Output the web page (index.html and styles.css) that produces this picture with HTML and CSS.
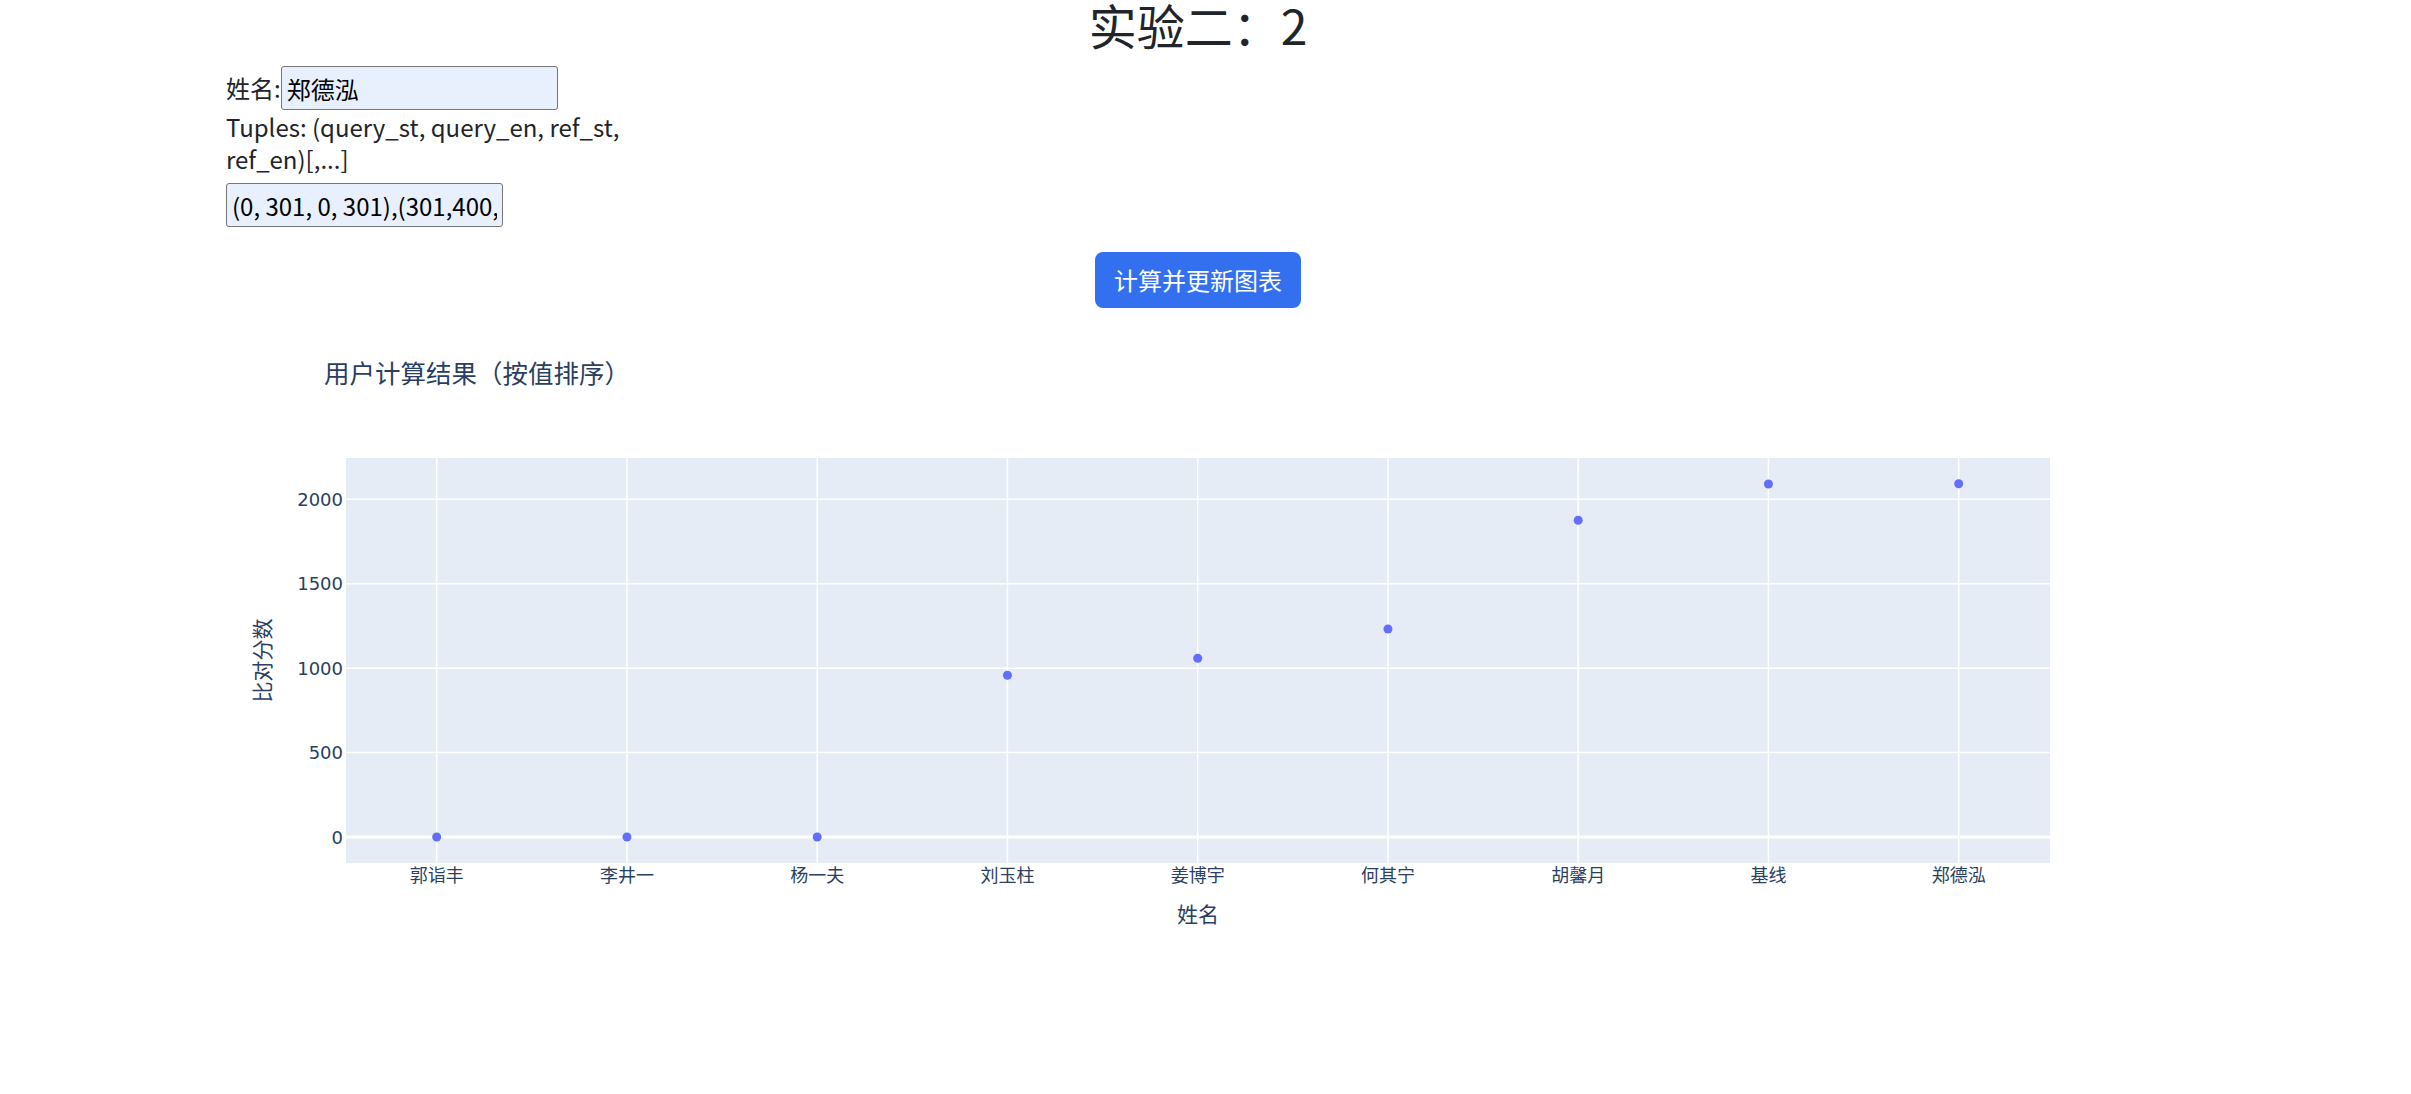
FILE: index.html
```html
<!DOCTYPE html>
<html lang="zh">
<head>
<meta charset="utf-8">
<title>实验二</title>
<link rel="stylesheet" href="styles.css">
</head>
<body>
<div class="page">
  <div class="container">
    <h1 class="title">实验二：2</h1>
    <div class="form">
      <div class="name-row"><label class="name-label">姓名:</label><input class="field" value="郑德泓"></div>
      <label class="tuples-label">Tuples: (query_st, query_en, ref_st, ref_en)[,...]</label>
      <input class="field tuples-field" value="(0, 301, 0, 301),(301,400, 301, 400)">
    </div>
    <div class="actions"><button class="btn">计算并更新图表</button></div>
    <div class="chart">
      <svg class="plot" width="1944" height="675" viewBox="0 0 1944 675">
        <rect x="120" y="150" width="1704" height="405" fill="#E5ECF6"/>
        <g stroke="#ffffff" stroke-width="1.5">
          <line x1="210.7" y1="150" x2="210.7" y2="555"/>
          <line x1="400.95" y1="150" x2="400.95" y2="555"/>
          <line x1="591.2" y1="150" x2="591.2" y2="555"/>
          <line x1="781.45" y1="150" x2="781.45" y2="555"/>
          <line x1="971.7" y1="150" x2="971.7" y2="555"/>
          <line x1="1161.95" y1="150" x2="1161.95" y2="555"/>
          <line x1="1352.2" y1="150" x2="1352.2" y2="555"/>
          <line x1="1542.45" y1="150" x2="1542.45" y2="555"/>
          <line x1="1732.7" y1="150" x2="1732.7" y2="555"/>
          <line x1="120" y1="191.3" x2="1824" y2="191.3"/>
          <line x1="120" y1="275.7" x2="1824" y2="275.7"/>
          <line x1="120" y1="360.2" x2="1824" y2="360.2"/>
          <line x1="120" y1="444.6" x2="1824" y2="444.6"/>
        </g>
        <line x1="120" y1="529" x2="1824" y2="529" stroke="#ffffff" stroke-width="3"/>
        <g fill="#636EFA">
          <circle cx="210.7" cy="529" r="4.5"/>
          <circle cx="400.95" cy="529" r="4.5"/>
          <circle cx="591.2" cy="529" r="4.5"/>
          <circle cx="781.45" cy="367.3" r="4.5"/>
          <circle cx="971.7" cy="350.3" r="4.5"/>
          <circle cx="1161.95" cy="321" r="4.5"/>
          <circle cx="1352.2" cy="212.3" r="4.5"/>
          <circle cx="1542.45" cy="176" r="4.5"/>
          <circle cx="1732.7" cy="175.7" r="4.5"/>
        </g>
        <g class="ytick" text-anchor="end">
          <text x="117" y="197.9">2000</text>
          <text x="117" y="282.3">1500</text>
          <text x="117" y="366.8">1000</text>
          <text x="117" y="451.2">500</text>
          <text x="117" y="535.6">0</text>
        </g>
        <g class="xtick" text-anchor="middle">
          <text x="210.7" y="574">郭诣丰</text>
          <text x="400.95" y="574">李井一</text>
          <text x="591.2" y="574">杨一夫</text>
          <text x="781.45" y="574">刘玉柱</text>
          <text x="971.7" y="574">姜博宇</text>
          <text x="1161.95" y="574">何其宁</text>
          <text x="1352.2" y="574">胡馨月</text>
          <text x="1542.45" y="574">基线</text>
          <text x="1732.7" y="574">郑德泓</text>
        </g>
        <text class="axis-title" x="972" y="614" text-anchor="middle">姓名</text>
        <text class="axis-title" transform="translate(44,352.5) rotate(-90)" text-anchor="middle">比对分数</text>
        <text class="chart-title" x="98" y="75">用户计算结果（按值排序）</text>
      </svg>
    </div>
  </div>
</div>
</body>
</html>
```

FILE: styles.css
```css
body {
  margin: 0;
  background: #ffffff;
  color: #212529;
  font-family: "Noto Sans CJK SC", "Noto Sans", sans-serif;
}

.page {
  width: 2396px;
}

.container {
  width: 1944px;
  margin: 0 auto;
}

.title {
  margin: 0 0 18px;
  font-size: 48px;
  line-height: 48px;
  font-weight: 400;
  text-align: center;
}

.form {
  width: 420px;
  display: flex;
  flex-direction: column;
  align-items: flex-start;
  font-size: 24px;
}

.name-row {
  display: flex;
  align-items: center;
  height: 44px;
}

.name-label {
  line-height: 32px;
}

.field {
  box-sizing: border-box;
  width: 277px;
  height: 44px;
  padding: 0 5px;
  border: 1px solid #767676;
  border-radius: 3px;
  background: #e8f0fe;
  color: #000000;
  font-family: inherit;
  font-size: 24px;
}

.tuples-label {
  display: block;
  margin-top: 1px;
  line-height: 32px;
}

.tuples-field {
  margin-top: 8px;
}

.actions {
  display: flex;
  justify-content: center;
  margin-top: 25px;
}

.btn {
  height: 56px;
  padding: 0 19px;
  border: none;
  border-radius: 8px;
  background: #3370f0;
  color: #ffffff;
  font-family: inherit;
  font-size: 24px;
  line-height: 32px;
}

.chart {
  height: 675px;
}

.plot {
  display: block;
}

.ytick text,
.xtick text {
  font-family: "DejaVu Sans", "Noto Sans CJK SC", sans-serif;
  font-size: 18px;
  fill: #2a3f5f;
}

.xtick text {
  font-family: "Noto Sans CJK SC", sans-serif;
}

.axis-title {
  font-family: "Noto Sans CJK SC", sans-serif;
  font-size: 21px;
  fill: #2a3f5f;
}

.chart-title {
  font-family: "Noto Sans CJK SC", sans-serif;
  font-size: 25.5px;
  fill: #2a3f5f;
}
```
